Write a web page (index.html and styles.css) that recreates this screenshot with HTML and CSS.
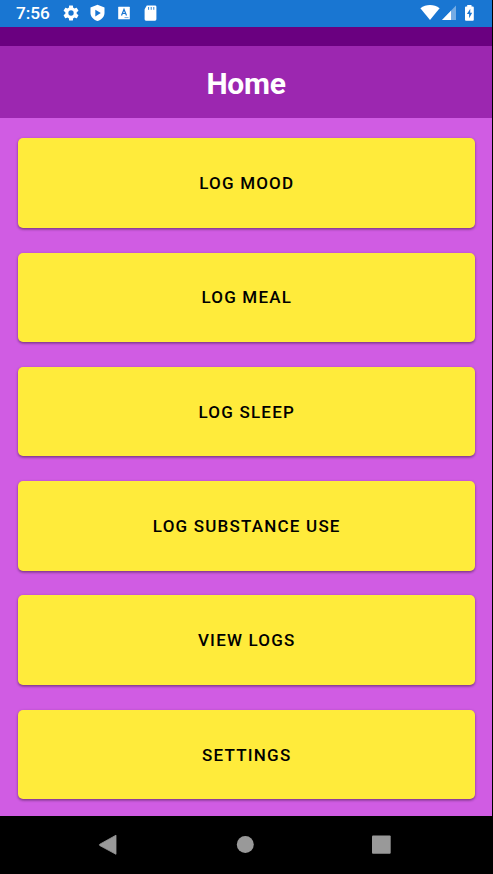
FILE: index.html
```html
<!DOCTYPE html>
<html lang="en">
<head>
<meta charset="utf-8">
<title>Home</title>
<link rel="stylesheet" href="styles.css">
</head>
<body>
<div class="phone">
  <div class="status">
    <span class="time">7:56</span>
    <svg class="left-icons" width="96" height="27" viewBox="0 0 96 27" fill="#fff">
      <path transform="translate(-1.100 3.900) scale(.76)" d="M19.430 12.980c.04-.32.07-.64.07-.98s-.03-.66-.07-.98l2.110-1.650c.19-.15.240-.42.120-.64l-2-3.460c-.12-.22-.39-.3-.61-.22l-2.490 1c-.52-.4-1.080-.73-1.690-.98l-.38-2.650C14.460 2.180 14.250 2 14 2h-4c-.25 0-.46.180-.49.420l-.38 2.650c-.61.250-1.170.590-1.690.98l-2.490-1c-.23-.09-.49 0-.61.220l-2 3.460c-.13.220-.07.490.12.640l2.110 1.650c-.04.320-.07.650-.07.980s.03.660.070.980l-2.110 1.650c-.19.150-.24.420-.12.640l2 3.460c.12.220.390.300.610.220l2.490-1c.52.400 1.080.730 1.690.980l.38 2.650c.03.240.240.420.490.420h4c.25 0 .46-.18.490-.42l.38-2.650c.61-.25 1.170-.59 1.690-.98l2.490 1c.23.090.490 0 .610-.22l2-3.460c.12-.22.070-.49-.12-.64zM12 15.500a3.500 3.500 0 1 1 0-7 3.500 3.500 0 0 1 0 7z"/>
      <path d="M34.500 4.800l7 2.700v5.200c0 3.800-2.700 6.900-7 8.300-4.300-1.400-7-4.500-7-8.300v-5.200z"/>
      <path d="M32.300 9.800v6.600l5.500-3.300z" fill="#1976d2"/>
      <rect x="55.200" y="6.700" width="11.600" height="12.500" rx=".5"/>
      <path d="M58.500 15.400l2.500-6 2.500 6M59.400 13.500h3.200" fill="none" stroke="#1976d2" stroke-width="1.200"/>
      <path d="M61.500 17.600h4" stroke="#1976d2" stroke-width=".6"/>
      <path d="M85.800 5.400h8.200q1.400 0 1.400 1.400v12.500q0 1.400-1.400 1.400h-9q-1.400 0-1.400-1.400V9.700q0-.8.600-1.400z" transform="translate(-2 0)"/>
      <path d="M85.600 7v2.800M88.200 7v2.800M90.800 7v2.800" stroke="#1976d2" stroke-width=".9"/>
    </svg>
    <svg class="right-icons" width="56" height="27" viewBox="0 0 56 27" fill="#fff">
      <path d="M.4 8.200C6 3.900 14 3.900 19.600 8.200L10 19.900z"/>
      <path d="M36 5.600V20H22z" opacity=".4"/>
      <path d="M31 10.700V20h-9z"/>
      <path d="M47.200 5h4.300v1.400h1.300q1 0 1 1v12.400q0 1-1 1H46q-1 0-1-1V7.400q0-1 1-1h1.200z"/>
      <path d="M50.300 8.800l-3.400 5.300h2.200v4.200l3.100-5.500H50.200z" fill="#1976d2"/>
    </svg>
  </div>
  <div class="strip"></div>
  <header class="bar"><h1>Home</h1></header>
  <main class="menu">
    <button>LOG MOOD</button>
    <button>LOG MEAL</button>
    <button>LOG SLEEP</button>
    <button>LOG SUBSTANCE USE</button>
    <button>VIEW LOGS</button>
    <button>SETTINGS</button>
  </main>
  <nav class="nav">
    <svg width="492" height="58" viewBox="0 0 492 58" fill="#999">
      <path d="M99.800 28.200L116 19.200V38.300L99.800 29.600q-1-.7 0-1.400z" stroke="#999" stroke-width=".8" stroke-linejoin="round"/>
      <circle cx="245.300" cy="28.600" r="8.500"/>
      <rect x="372" y="19.500" width="18.700" height="18.300" rx="1"/>
    </svg>
  </nav>
</div>
</body>
</html>
```
FILE: styles.css
```css
* { box-sizing: border-box; }
body { margin: 0; background: #000; font-family: Roboto, sans-serif; }
.phone { width: 492px; height: 874px; display: flex; flex-direction: column; overflow: hidden; }
.status { height: 27px; flex: none; background: #1976d2; color: #fff; display: flex; align-items: center; padding-left: 16px; }
.time { width: 47px; font-size: 17.3px; font-weight: 500; line-height: 27px; letter-spacing: -.1px; }
.left-icons { flex: none; }
.right-icons { flex: none; margin-left: auto; margin-right: 16px; }
.strip { height: 19.3px; flex: none; background: #6a0080; }
.bar { height: 72px; flex: none; background: #9c27b0; display: flex; align-items: center; justify-content: center; padding-top: 4px; }
h1 { margin: 0; color: #fff; font-size: 30px; font-weight: 700; line-height: 36px; letter-spacing: -.3px; }
.menu { height: 697.7px; flex: none; background: #d05ce3; display: flex; flex-direction: column; gap: 24.7px; padding: 20px 17.5px 0 18px; }
button { height: 89.6px; flex: none; border: 0; border-radius: 5px; padding: 0 0 0 1px; background: #ffeb3b; color: #000; font: 500 17px/20px Roboto, sans-serif; letter-spacing: 1.2px; box-shadow: 0 1px 3px rgba(0,0,0,.35), 0 2px 2px rgba(0,0,0,.12); }
.nav { height: 58px; flex: none; background: #000; }
.nav svg { display: block; }
```
